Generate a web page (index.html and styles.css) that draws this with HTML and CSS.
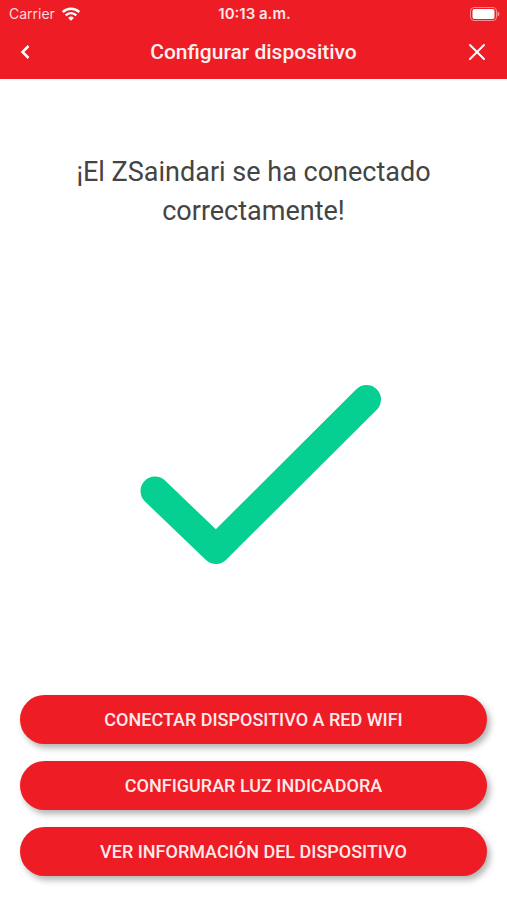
FILE: index.html
```html
<!DOCTYPE html>
<html lang="es">
<head>
<meta charset="utf-8">
<meta name="viewport" content="width=device-width, initial-scale=1">
<title>Configurar dispositivo</title>
<link rel="stylesheet" href="styles.css">
</head>
<body>
<header class="header">
  <div class="status">
    <div class="carrier">
      <span>Carrier</span>
      <svg class="wifi" viewBox="0 0 20 14" aria-hidden="true">
        <path d="M1.700 5.100a11.800 11.800 0 0 1 16.600 0M4.700 8.300a7.500 7.500 0 0 1 10.600 0"/>
        <path class="wifi-dot" d="M10 13.800 7.100 10.900a4.100 4.100 0 0 1 5.800 0z"/>
      </svg>
    </div>
    <span class="time">10:13 a.m.</span>
    <svg class="battery" viewBox="0 0 30 14" aria-hidden="true">
      <rect class="battery-case" x="0.5" y="0.5" width="26" height="13" rx="3.500"/>
      <rect class="battery-fill" x="2.500" y="2" width="22" height="10" rx="2"/>
      <path class="battery-tip" d="M27.500 4.500c2.600 1 2.600 4 0 5z"/>
    </svg>
  </div>
  <nav class="bar">
    <button class="icon-button" type="button" aria-label="Atrás">
      <svg class="icon" viewBox="0 0 24 24"><path class="back" d="m15.500 6-6 6 6 6"/></svg>
    </button>
    <h1 class="title">Configurar dispositivo</h1>
    <button class="icon-button icon-button-end" type="button" aria-label="Cerrar">
      <svg class="icon" viewBox="0 0 24 24"><path class="close" d="m5 5 14 14M19 5 5 19"/></svg>
    </button>
  </nav>
</header>
<main class="content">
  <p class="message">¡El ZSaindari se ha conectado correctamente!</p>
  <div class="result">
    <svg class="check" viewBox="0 0 242 180" aria-hidden="true"><path d="m15 106 61 58.500L226.500 14.500"/></svg>
  </div>
  <div class="actions">
    <button class="action" type="button">CONECTAR DISPOSITIVO A RED WIFI</button>
    <button class="action" type="button">CONFIGURAR LUZ INDICADORA</button>
    <button class="action" type="button">VER INFORMACIÓN DEL DISPOSITIVO</button>
  </div>
</main>
</body>
</html>
```

FILE: styles.css
```css
* {
  box-sizing: border-box;
}

body {
  display: flex;
  flex-direction: column;
  min-height: 100vh;
  margin: 0;
  background: #fff;
  color: #444;
  font-family: Roboto, "Liberation Sans", sans-serif;
}

button {
  border: 0;
  font: inherit;
  cursor: pointer;
}

svg {
  display: block;
}

.header {
  padding-bottom: 6px;
  background: #ee1c25;
  color: #fff;
}

.status {
  display: grid;
  grid-template-columns: 1fr auto 1fr;
  align-items: center;
  height: 27px;
  padding: 0 7px 0 9px;
  font-family: Inter, "Liberation Sans", sans-serif;
  font-size: 14px;
}

.carrier {
  display: flex;
  align-items: center;
  gap: 6px;
  color: #ffd9db;
}

.wifi {
  width: 20px;
  height: 14px;
  fill: none;
  stroke: #fff;
  stroke-width: 2.4;
}

.wifi-dot {
  fill: #fff;
  stroke: none;
}

.time {
  color: #ffe6e7;
  font-size: 15px;
  font-weight: 600;
}

.battery {
  justify-self: end;
  width: 30px;
  height: 14px;
}

.battery-case {
  fill: none;
  stroke: #f78d92;
}

.battery-fill {
  fill: #fff;
}

.battery-tip {
  fill: #f78d92;
}

.bar {
  display: grid;
  grid-template-columns: 1fr auto 1fr;
  align-items: center;
  height: 46px;
  padding: 4px 18px 0 13px;
  padding: 4px 13px 0;
}

.icon-button {
  justify-self: start;
  padding: 0;
  background: none;
  color: #fff;
}

.icon-button-end {
  justify-self: end;
  padding-right: 5px;
}

.icon {
  width: 24px;
  height: 24px;
  fill: none;
  stroke: currentColor;
}

.back {
  stroke-width: 2.5;
}

.close {
  stroke-width: 2;
  stroke-linecap: round;
}

.title {
  margin: 0;
  color: #fff0f0;
  font-size: 21px;
  font-weight: 500;
  line-height: 24px;
}

.content {
  display: flex;
  flex: 1;
  flex-direction: column;
  padding: 74px 20px 24px;
}

.message {
  margin: 0 auto;
  max-width: 380px;
  font-size: 27px;
  line-height: 39px;
  text-align: center;
}

.result {
  display: flex;
  flex: 1;
  align-items: center;
  justify-content: center;
  padding: 44px 0 20px;
}

.check {
  width: 242px;
  height: 180px;
  margin-left: 14px;
  fill: none;
  stroke: #06cf92;
  stroke-width: 29;
  stroke-linecap: round;
  stroke-linejoin: round;
}

.actions {
  display: flex;
  flex-direction: column;
  gap: 17px;
}

.action {
  height: 49px;
  border-radius: 25px;
  background: #ee1c25;
  box-shadow: 3px 4px 6px rgba(0, 0, 0, 0.3);
  color: #ffe9ea;
  font-size: 18px;
  font-weight: 500;
}
```
